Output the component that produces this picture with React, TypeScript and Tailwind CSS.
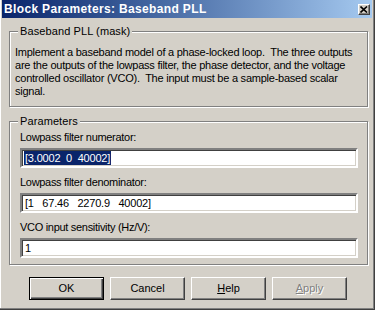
import React from "react";

const sunken =
  "h-[20px] w-[338px] bg-white border-2 border-t-[#808080] border-l-[#808080] border-b-white border-r-white shadow-[inset_1px_1px_0_#404040,inset_-1px_-1px_0_#d4d0c8] flex items-center pl-[2px] whitespace-pre";

const raised =
  "w-[75px] h-[23px] flex items-center justify-center border border-t-white border-l-white border-b-[#404040] border-r-[#404040] shadow-[inset_-1px_-1px_0_#808080]";

const Group = ({ title, className, children }: { title: string; className: string; children: React.ReactNode }) => (
  <div
    className={
      "relative ml-[7px] w-[359px] border border-[#808080] shadow-[inset_1px_1px_0_#fff,1px_1px_0_#fff] " + className
    }
  >
    <div className="absolute -top-[7px] left-[8px] px-[2px] bg-[#d4d0c8] leading-[13px] tracking-[0.1px]">{title}</div>
    {children}
  </div>
);

const App = () => {
  return (
    <div className="w-[375px] h-[310px] bg-[#d4d0c8] font-['Liberation_Sans',Arial,sans-serif] text-[11px] text-black flex flex-col pl-[2px] pr-[3px] shadow-[inset_-1px_-1px_0_#404040,inset_-2px_-2px_0_#808080,inset_1px_0_0_#fff]">
      {/* title bar */}
      <div className="h-[18px] flex items-center justify-between pl-[2px] pr-[2px] bg-gradient-to-r from-[#0a246a] to-[#a6caf0]">
        <span className="text-white font-bold text-[12px] tracking-[0.35px]">Block Parameters: Baseband PLL</span>
        <button className="w-[12px] h-[11px] bg-[#d4d0c8] flex items-center justify-center border border-t-white border-l-white border-b-[#404040] border-r-[#404040] shadow-[inset_-1px_-1px_0_#808080]">
          <svg width="8" height="7" viewBox="0 0 8 7">
            <path d="M0.5 0.5 L7 6.5 M7 0.5 L0.5 6.5" stroke="#000" strokeWidth="1.6" />
          </svg>
        </button>
      </div>

      <Group title="Baseband PLL (mask)" className="mt-[13px] h-[76px] pt-[14px] pl-[5px]">
        <div className="leading-[13px] whitespace-nowrap tracking-[-0.24px]">
          Implement a baseband model of a phase-locked loop.&nbsp; The three outputs
          <br />
          are the outputs of the lowpass filter, the phase detector, and the voltage
          <br />
          controlled oscillator (VCO).&nbsp; The input must be a sample-based scalar
          <br />
          signal.
        </div>
      </Group>

      <Group title="Parameters" className="mt-[14px] h-[144px] pt-[9px] pl-[10px]">
        <div className="leading-[13px] tracking-[-0.3px]">Lowpass filter numerator:</div>
        <div className={sunken + " mt-[4px]"}>
          <span className="bg-[#0a246a] text-white leading-[14px] px-[1px] tracking-[-0.2px]">[3.0002  0  40002]</span>
        </div>
        <div className="leading-[13px] mt-[8px] tracking-[-0.3px]">Lowpass filter denominator:</div>
        <div className={sunken + " mt-[4px]"}>
          <span className="leading-[14px] px-[1px] tracking-[-0.2px]">[1   67.46   2270.9   40002]</span>
        </div>
        <div className="leading-[13px] mt-[8px] tracking-[-0.3px]">VCO input sensitivity (Hz/V):</div>
        <div className={sunken + " mt-[4px]"}>
          <span className="leading-[14px] px-[1px]">1</span>
        </div>
      </Group>

      <div className="flex gap-[6px] ml-[27px] mt-[12px]">
        <button className="w-[75px] h-[23px] flex items-center justify-center border border-black shadow-[inset_1px_1px_0_#fff,inset_-1px_-1px_0_#404040,inset_-2px_-2px_0_#808080]">
          OK
        </button>
        <button className={raised}>Cancel</button>
        <button className={raised}>
          <span>
            <span className="underline">H</span>elp
          </span>
        </button>
        <button className={raised + " text-[#808080] [text-shadow:1px_1px_0_#fff]"}>
          <span>
            <span className="underline">A</span>pply
          </span>
        </button>
      </div>
    </div>
  );
};

export default App;
